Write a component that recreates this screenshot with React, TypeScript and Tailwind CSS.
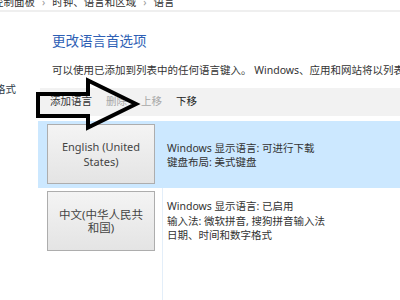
const ui = {
  fontFamily: '"Noto Sans", "Noto Sans CJK SC", sans-serif',
};

function LangButton({ lines, lead }: { lines: string[]; lead: string }) {
  return (
    <div
      className={`w-[108px] h-[60px] flex flex-col items-center justify-center border border-[#adadad] bg-gradient-to-b from-[#f4f4f4] to-[#e4e4e4] text-[#444] ${lead}`}
    >
      {lines.map((l) => (
        <span key={l} className="whitespace-nowrap">
          {l}
        </span>
      ))}
    </div>
  );
}

export default function App() {
  return (
    <div
      className="relative w-[400px] h-[300px] overflow-hidden bg-white text-[10.5px] text-[#222]"
      style={ui}
    >
      {/* Breadcrumb */}
      <div className="h-[10px] overflow-hidden">
        <div className="flex items-center gap-[7px] -mt-[4px] -ml-[7px] leading-[12px] text-[#333] whitespace-nowrap">
          <span>控制面板</span>
          <span className="text-[#999]">›</span>
          <span>时钟、语言和区域</span>
          <span className="text-[#999]">›</span>
          <span>语言</span>
        </div>
      </div>
      <div className="h-[2px] bg-[#efefef]" />

      <div className="flex">
        {/* Sidebar */}
        <div className="w-[40px] shrink-0">
          <div className="mt-[70px] -ml-[5px] leading-[14px] text-[#2f3b48] whitespace-nowrap">
            格式
          </div>
        </div>

        {/* Content */}
        <div className="flex-1 min-w-0">
          <h1 className="mt-[21px] ml-[12px] text-[13.5px] leading-[16px] text-[#2e5fb5] whitespace-nowrap">
            更改语言首选项
          </h1>
          <p className="mt-[14px] ml-[12px] leading-[14px] text-[#333] whitespace-nowrap">
            可以使用已添加到列表中的任何语言键入。 Windows、应用和网站将以列表中支持的第一种语言显示。
          </p>

          {/* Toolbar */}
          <div className="mt-[11px] h-[28px] bg-[#f2f2f2] flex items-center gap-[14px] pl-[10px]">
            <span className="text-[#333]">添加语言</span>
            <span className="text-[#a8a8a8]">删除</span>
            <span className="text-[#a8a8a8]">上移</span>
            <span className="text-[#222]">下移</span>
          </div>

          {/* Language list */}
          <div className="mt-[5px] -ml-[2px]">
            <div className="flex h-[67px] bg-[#cce8ff]">
              <div className="w-[124px] shrink-0 pt-[3px] pl-[9px]">
                <LangButton lines={["English (United", "States)"]} lead="text-[11px] leading-[15.5px]" />
              </div>
              <div className="flex flex-col justify-center pl-[5px] leading-[14px] text-[#333] whitespace-nowrap">
                <span>Windows 显示语言: 可进行下载</span>
                <span>键盘布局: 美式键盘</span>
              </div>
            </div>
            <div className="flex h-[112px]">
              <div className="w-[124px] shrink-0 pt-[3px] pl-[9px]">
                <LangButton lines={["中文(中华人民共", "和国)"]} lead="text-[11.5px] leading-[13.5px]" />
              </div>
              <div className="border-l border-[#e3eef9] pl-[4px]">
                <div className="mt-[3px] h-[60px] flex flex-col justify-center leading-[14.5px] text-[#333] whitespace-nowrap">
                  <span>Windows 显示语言: 已启用</span>
                  <span>输入法: 微软拼音, 搜狗拼音输入法</span>
                  <span>日期、时间和数字格式</span>
                </div>
              </div>
            </div>
          </div>
        </div>
      </div>

      {/* Annotation arrow */}
      <svg className="absolute left-0 top-0 pointer-events-none" width="400" height="300">
        <path
          d="M38 94 L88 94 L88 80.5 L136 104 L88 127.5 L88 116 L38 116 Z"
          fill="none"
          stroke="#000"
          strokeWidth="4"
          strokeLinejoin="miter"
        />
      </svg>
    </div>
  );
}
